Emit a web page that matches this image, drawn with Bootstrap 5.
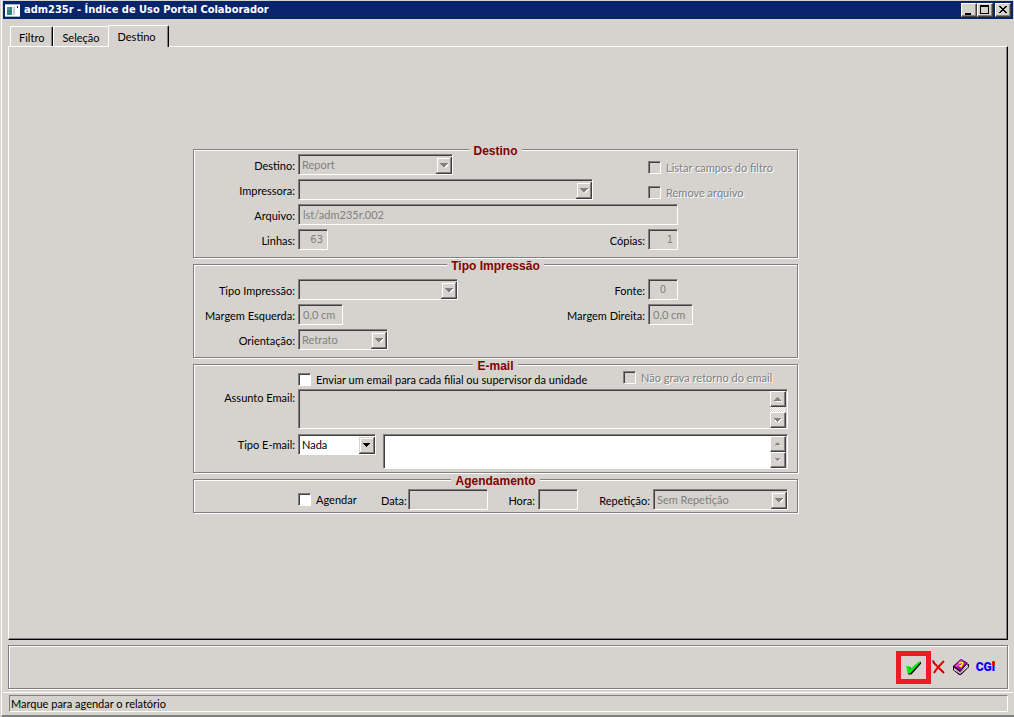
<!DOCTYPE html>
<html lang="pt-BR">
<head>
<meta charset="utf-8">
<meta name="viewport" content="width=device-width, initial-scale=1">
<title>adm235r - Índice de Uso Portal Colaborador</title>
<link href="https://cdn.jsdelivr.net/npm/bootstrap@5.3.0/dist/css/bootstrap.min.css" rel="stylesheet">
<style>
:root{--face:#d6d3ce;--shade:#808080;--deep:#404040}
body{background:var(--face);color:#000;font:11px/13px Lato,"Liberation Sans",Arial,sans-serif}
.app{border-left:1px solid #fff;border-bottom:2px solid var(--shade);margin-left:1px;padding:1px 1px 0}
.titlebar{background:#08246b;color:#fff;height:18px;padding:0 2px}
.titlebar h1{font:bold 11px/18px "DejaVu Sans Condensed","DejaVu Sans",sans-serif;margin:0}
.winbtn{width:16px;height:14px;padding:0;background:var(--face);border:1px solid;border-color:#fff var(--deep) var(--deep) #fff;box-shadow:inset -1px -1px var(--shade);display:block}
.winbtn.close-win{margin-left:2px}
.winbtn svg,.tool svg{display:block}
.workarea{padding:6px 5px 3px}
.tabs{padding-left:2px;height:21px;position:relative;z-index:1}
.tab{background:var(--face);border:0;border-top:1px solid #fff;border-left:1px solid #fff;border-radius:2px 2px 0 0;height:20px;padding:3px 8px 0;line-height:14px;color:#000}
.tab.raised{border-right:1px solid #000;box-shadow:inset -1px 0 var(--shade)}
.tab.active{height:22px;margin-bottom:-1px;padding:1px 12px 0 9px}
.sheet{border:1px solid;border-color:#fff #000 #000 #fff;box-shadow:inset -1px -1px var(--shade);padding:0 25px 28px 0}
.form-stack{width:605px;gap:2px}
.group{border:1px solid var(--shade);box-shadow:1px 1px #fff,inset 1px 1px #fff;padding:0 1px;margin:0}
.group legend{float:none;width:auto;margin:0 auto;padding:4px 4px 0;background:var(--face);color:#840000;font:bold 12px/5px "Liberation Sans",Arial,sans-serif}
.fields{display:grid;grid-template-columns:100px 1fr 80px 148px;column-gap:3px;row-gap:4px;align-items:center}
.group label:not(.tick){text-align:right;padding-top:2px}
.g-dest{padding-bottom:7px}
.g-dest .tick{padding-top:5px}
.g-print{padding:10px 0 7px}
.g-mail{row-gap:0;padding-bottom:3px;grid-template-rows:20px 45px 35px;align-items:start}
.g-plan{display:grid;grid-template-columns:100px 80px 24px 80px 44px 40px 69px 135px;column-gap:3px;align-items:center;padding:5px 0 2px}
.c2{grid-column:2}.c3{grid-column:3}.c4{grid-column:4}
.span2{grid-column:2/4}.span3{grid-column:2/5}
.sunken,.combo{display:block;height:21px;background-color:#fff;color:#000;border:1px solid;border-color:var(--shade) #fff #fff var(--shade);border-radius:0;box-shadow:inset 1px 1px var(--deep);padding:0 4px;font:inherit;line-height:18px;appearance:none;resize:none;outline:0}
.combo{padding:0 18px 0 3px;background-repeat:no-repeat;background-position:right 0 top 2px;background-image:url("data:image/svg+xml,%3Csvg xmlns='http://www.w3.org/2000/svg' width='16' height='17' shape-rendering='crispEdges'%3E%3Cpath fill='%23d6d3ce' d='M0 0h16v17H0z'/%3E%3Cpath fill='%23fff' d='M1 1h13v1H2v13H1z'/%3E%3Cpath fill='%23808080' d='M14 1h1v15H1v-1h13z'/%3E%3Cpath fill='%23404040' d='M15 0h1v17H0v-1h15z'/%3E%3Cpath d='M4 6h7v1h-1v1H9v1H8v1H7V9H6V8H5V7H4z'/%3E%3C/svg%3E")}
.sunken:disabled,.combo:disabled{background-color:var(--face);color:var(--shade);opacity:1}
.combo:disabled{background-image:url("data:image/svg+xml,%3Csvg xmlns='http://www.w3.org/2000/svg' width='16' height='17' shape-rendering='crispEdges'%3E%3Cpath fill='%23fff' d='M1 1h13v1H2v13H1z'/%3E%3Cpath fill='%23808080' d='M14 1h1v15H1v-1h13z'/%3E%3Cpath fill='%23404040' d='M15 0h1v17H0v-1h15z'/%3E%3Cpath fill='%23fff' d='M5 7h8v1h-1v1h-1v1h-1v1H9v-1H8V9H7V8H5z'/%3E%3Cpath fill='%23808080' d='M4 6h8v1h-1v1h-1v1H9v1H8H7V9H6V8H5V7H4z'/%3E%3C/svg%3E")}
.num{text-align:right;font:10px/18px "DejaVu Sans",sans-serif;width:30px}
.w40{width:40px}.w45{width:45px}.w80{width:80px}.w90{width:90px}.w78{width:78px}.w135{width:135px}.w155{width:155px}.w160{width:160px}.w295{width:295px}.w380{width:380px}
.tick{display:flex;align-items:center;gap:5px;white-space:nowrap}
.tick input{appearance:none;margin:0;width:13px;height:13px;flex:none;background:#fff;border:1px solid;border-color:var(--shade) #fff #fff var(--shade);box-shadow:inset 1px 1px var(--deep)}
.tick input:checked{background:var(--deep)}
.tick input:disabled{background:var(--face)}
.tick.off{color:var(--shade);text-shadow:1px 1px #fff}
.send-line{display:grid;grid-template-columns:325px 1fr;align-items:start;padding-top:2px}
.send-line .tick:first-child{padding-top:2px}
.memo{display:flex;height:40px;border:1px solid;border-color:var(--shade) #fff #fff var(--shade);box-shadow:inset 1px 1px var(--deep);padding:1px 1px 0 1px}
.memo textarea{flex:1;min-width:0;border:0;resize:none;outline:0;padding:2px;background:#fff;overflow:hidden}
.memo textarea:disabled{background:transparent}
.memo.short{height:35px}
.scroller{display:flex;flex-direction:column;justify-content:space-between;width:16px;background:repeating-conic-gradient(#fff 0 25%,var(--face) 0 50%) 0 0/2px 2px}
.scroller button{display:flex;align-items:center;justify-content:center;width:16px;height:16px;padding:0;background:var(--face);border:1px solid;border-color:#fff var(--deep) var(--deep) #fff;box-shadow:inset -1px -1px var(--shade)}
.mail-line{display:flex;gap:7px}
.footbar{border:1px solid var(--shade);box-shadow:inset 1px 1px #fff,1px 1px #fff;height:44px;padding-right:12px;margin-top:5px}
.tool{padding:0;border:0;background:none}
.tool.marked{border:5px solid #ed1c24;width:35px;height:33px;padding-left:5px;margin-right:1px}
.tool.book{margin:0 7px}
.tool.cgi{position:relative;color:#00f;font:900 12px/14px Roboto,"Liberation Sans",sans-serif}
.tool.cgi::after{content:"";position:absolute;right:0;top:2px;width:3px;height:3px;background:#f00000}
.statusbar{border-top:1px solid #fff;padding:2px 5px 3px 6px}
.statusbar output{display:block;height:17px;border:1px solid;border-color:var(--shade) #fff #fff var(--shade);padding:0 1px;line-height:15px}
</style>
</head>
<body>
<svg class="d-none" aria-hidden="true">
  <symbol id="up" viewBox="0 0 8 5"><path fill="#fff" d="M1 5h7V4H7V3H4z"/><path fill="#808080" d="M3 0h1v1h1v1h1v1h1v1H0V3h1V2h1V1h1z"/></symbol>
  <symbol id="down" viewBox="0 0 8 5"><path fill="#fff" d="M1 1h7v1H7v1H6v1H5v1H4V4H1z"/><path fill="#808080" d="M0 0h7v1H6v1H5v1H4v1H3V3H2V2H1V1H0z"/></symbol>
</svg>
<div class="app d-flex flex-column min-vh-100">
  <header class="titlebar d-flex align-items-center">
    <svg width="15" height="13" viewBox="0 0 15 13" class="me-1" shape-rendering="crispEdges" aria-hidden="true"><path fill="#fff" d="M0 0h15v13H0z"/><path fill="#a5b5bd" d="M0 0h15v1H0zM0 12h15v1H0z"/><path fill="#31867b" d="M2 3h5v8H2z"/><path fill="#5a8ea8" d="M2 3h3v3H2z"/><path fill="#c6cbd6" d="M8 3h2v8H8z"/><path fill="#08246b" d="M12 2h1v2h-1z"/></svg>
    <h1 class="flex-grow-1 text-truncate">adm235r - Índice de Uso Portal Colaborador</h1>
    <button class="winbtn" aria-label="Minimizar"><svg width="14" height="12"><path d="M3 9h6v2H3z"/></svg></button>
    <button class="winbtn" aria-label="Maximizar"><svg width="14" height="12"><path fill-rule="evenodd" d="M2 1h9v9H2zM3 3h7v6H3z"/></svg></button>
    <button class="winbtn close-win" aria-label="Fechar"><svg width="14" height="12" shape-rendering="crispEdges"><path d="M3 2h2v1h1v1h2V3h1V2h2v1h-1v1H9v1H8v1h1v1h1v1h1v1H9V8H8V7H6v1H5v1H3V8h1V7h1V6h1V5H5V4H4V3H3z"/></svg></button>
  </header>

  <main class="workarea d-flex flex-column flex-grow-1">
    <nav class="tabs d-flex align-items-end" role="tablist">
      <button class="tab raised" role="tab">Filtro</button>
      <button class="tab" role="tab">Seleção</button>
      <button class="tab raised active" role="tab" aria-selected="true">Destino</button>
    </nav>
    <section class="sheet flex-grow-1 d-flex align-items-center justify-content-center">
      <form class="form-stack d-flex flex-column">
        <fieldset class="group">
          <legend>Destino</legend>
          <div class="fields g-dest">
            <label for="dest">Destino:</label>
            <select id="dest" class="combo w155" disabled><option>Report</option></select>
            <label class="tick off c4"><input type="checkbox" disabled>Listar campos do filtro</label>
            <label for="imp">Impressora:</label>
            <select id="imp" class="combo w295 span2" disabled><option></option></select>
            <label class="tick off c4"><input type="checkbox" disabled>Remove arquivo</label>
            <label for="arq">Arquivo:</label>
            <input id="arq" class="sunken w380 span3" value="lst/adm235r.002" disabled>
            <label for="lin">Linhas:</label>
            <input id="lin" class="sunken num" value="63" disabled>
            <label for="cop" class="c3">Cópias:</label>
            <input id="cop" class="sunken num" value="1" disabled>
          </div>
        </fieldset>
        <fieldset class="group">
          <legend>Tipo Impressão</legend>
          <div class="fields g-print">
            <label for="tipo">Tipo Impressão:</label>
            <select id="tipo" class="combo w160" disabled><option></option></select>
            <label for="fonte" class="c3">Fonte:</label>
            <input id="fonte" class="sunken num text-center" value="0" disabled>
            <label for="me">Margem Esquerda:</label>
            <input id="me" class="sunken w45" value="0,0 cm" disabled>
            <label for="md" class="c3">Margem Direita:</label>
            <input id="md" class="sunken w45" value="0,0 cm" disabled>
            <label for="ori">Orientação:</label>
            <select id="ori" class="combo w90" disabled><option>Retrato</option></select>
          </div>
        </fieldset>
        <fieldset class="group">
          <legend>E-mail</legend>
          <div class="fields g-mail">
            <div class="send-line span3">
              <label class="tick"><input type="checkbox">Enviar um email para cada filial ou supervisor da unidade</label>
              <label class="tick off"><input type="checkbox" disabled>Não grava retorno do email</label>
            </div>
            <label for="ass">Assunto Email:</label>
            <div class="memo span3 me-2">
              <textarea id="ass" disabled></textarea>
              <div class="scroller">
                <button type="button" aria-label="Subir"><svg width="8" height="5"><use href="#up"/></svg></button>
                <button type="button" aria-label="Descer"><svg width="8" height="5"><use href="#down"/></svg></button>
              </div>
            </div>
            <label for="te" class="pt-1">Tipo E-mail:</label>
            <div class="mail-line span3 me-2">
              <select id="te" class="combo w78"><option>Nada</option></select>
              <div class="memo short flex-grow-1">
                <textarea aria-label="Destinatários"></textarea>
                <div class="scroller">
                  <button type="button" aria-label="Subir"><svg width="6" height="4"><use href="#up"/></svg></button>
                  <button type="button" aria-label="Descer"><svg width="6" height="4"><use href="#down"/></svg></button>
                </div>
              </div>
            </div>
          </div>
        </fieldset>
        <fieldset class="group">
          <legend>Agendamento</legend>
          <div class="g-plan">
            <label class="tick c2"><input type="checkbox">Agendar</label>
            <label for="data">Data:</label>
            <input id="data" class="sunken w80" disabled>
            <label for="hora">Hora:</label>
            <input id="hora" class="sunken w40" disabled>
            <label for="rep">Repetição:</label>
            <select id="rep" class="combo w135" disabled><option>Sem Repetição</option></select>
          </div>
        </fieldset>
      </form>
    </section>
    <div class="footbar d-flex align-items-center justify-content-end" role="toolbar">
      <button class="tool marked" aria-label="Confirmar"><svg width="15" height="15" viewBox="0 0 14 13"><path fill="#000" d="M1 6h3l1 4 9-9v2L5 13H2z"/><path fill="#00f000" d="M0 5h3l1 3 8-7h2L4 12H2z"/></svg></button>
      <button class="tool" aria-label="Cancelar"><svg width="14" height="14" viewBox="0 0 14 14"><path d="M1 2l11 11M12 1C8 5 4 9 2 13" stroke="#e00000" stroke-width="2" fill="none"/><path d="M0 1h2v2M9 10l3 3" stroke="#800000" fill="none"/></svg></button>
      <button class="tool book" aria-label="Ajuda"><svg width="16" height="16" viewBox="0 0 16 16"><path d="M0 7v4l6 5h2l8-8V5z" fill="#202"/><path d="M1 9l6 4 7-8 1 3-8 7-6-4z" fill="#fff"/><path d="M2 11l5 3 7-7" fill="none" stroke="#999"/><path d="M0 7L8 0l7 4-8 9z" fill="#303"/><path d="M1 7l7-6 6 3-7 7z" fill="#b800b8"/><path d="M2 7l2 1 6-6-2-1z" fill="#d850d8"/><path d="M6 4q4-1 4 0 0 2-3 3l2 1" fill="none" stroke="#ff0" stroke-width="1.5"/></svg></button>
      <button class="tool cgi">CGi</button>
    </div>
  </main>
  <footer class="statusbar"><output>Marque para agendar o relatório</output></footer>
</div>
<script src="https://cdn.jsdelivr.net/npm/bootstrap@5.3.0/dist/js/bootstrap.bundle.min.js"></script>
</body>
</html>
